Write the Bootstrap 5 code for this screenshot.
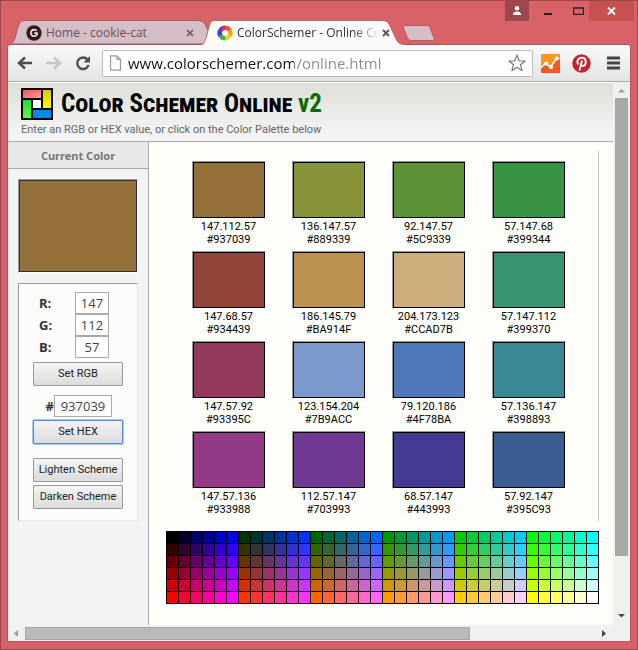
<!DOCTYPE html>
<html lang="en">
<head>
<meta charset="utf-8">
<meta name="viewport" content="width=device-width, initial-scale=1">
<title>ColorSchemer - Online Color Scheme Generator</title>
<link rel="stylesheet" href="https://cdn.jsdelivr.net/npm/bootstrap@5.3.0/dist/css/bootstrap.min.css">
<style>
  body { background: #d96269; border: 1px solid #9e484d; padding: 0 0 7px; font-family: Roboto, sans-serif; font-size: 11px; line-height: 13px; color: #000; }
  button { font-family: inherit; }
  svg { display: block; flex-shrink: 0; }

  /* window frame */
  .titlebar { height: 43px; padding: 0 3px 0 11px; }
  .browser-tab { position: relative; height: 24px; padding: 1px 14px 0; font: 12px/22px "Open Sans", sans-serif; color: #6e4d55; }
  .browser-tab > * { position: relative; }
  .browser-tab > .tab-shape { position: absolute; inset: 0; width: 100%; height: 100%; overflow: visible; }
  .tab-back { width: 196px; }
  .tab-front { width: 202px; padding-right: 15px; margin-left: -5px; color: #333; }
  .tab-label { color: inherit; text-decoration: none; overflow: hidden; white-space: nowrap; }
  .tab-front .tab-label { -webkit-mask-image: linear-gradient(90deg, #000 116px, transparent 142px); mask-image: linear-gradient(90deg, #000 116px, transparent 142px); }
  .bare { background: none; border: 0; padding: 0; color: inherit; }
  .new-tab { margin: 0 0 3px -3px; }
  .win-btn { height: 20px; border: 0; padding: 0; display: flex; align-items: center; justify-content: center; background: none; }
  .win-user { width: 24px; background: #9b474b; }
  .win-min { width: 38px; }
  .win-max { width: 22px; }
  .win-close { width: 45px; background: #c75050; }
  .window { margin: 0 6px; border: 1px solid #b5575c; border-top-color: #9f5358; border-radius: 4px 4px 0 0; background: #f0f0f0; overflow: hidden; }

  /* toolbar */
  .toolbar { height: 37px; padding: 0 9px; background: linear-gradient(#fafafa, #e3e3e3); border-bottom: 1px solid #aaa; }
  .nav-buttons { gap: 13px; }
  .address { height: 27px; margin-left: 11px; padding: 0 6px; background: #fff; border: 1px solid #bcbcbc; border-radius: 2px; }
  .address input { min-width: 0; border: 0; outline: 0; padding: 0; margin-left: 6px; font: 15px/24px "Open Sans", sans-serif; color: transparent; background: linear-gradient(90deg, #111 0 166px, #8b8b8b 166px); -webkit-background-clip: text; background-clip: text; }

  /* page */
  .site-head { height: 60px; padding: 5px 13px 0 13px; background: linear-gradient(#dfdfd9, #f4f4f4 90%); border-bottom: 1px solid #aaa; border-top: 1px solid #fff; }
  .site-title { margin: 0; font: bold 25px/32px "Roboto Condensed", "Open Sans Condensed", Roboto, sans-serif; font-variant: small-caps; white-space: nowrap; }
  .site-title span { color: #006e00; font-variant: normal; }
  .tagline { margin: 0; color: #666; line-height: 20px; }
  .sidebar { width: 141px; background: #f3f3f3; border-right: 1px solid #aaa; }
  .side-title { margin: 0; padding: 0; height: 27px; font: bold 11px/28px "Noto Sans", sans-serif; text-align: center; color: #777; background: #e8e8e8; border-bottom: 1px solid #aaa; }
  .inset { border: 1px solid; border-color: #999 #fff #fff #999; }
  .inset > div { border: 1px solid #000; }
  .current-color { height: 94px; margin: 10px 10px 0 10px; }
  .current-color > div { height: 100%; background: #937039; border-color: #333; }
  .controls { margin: 10px 10px 0 10px; padding: 8px 14px 11px; background: #fcfcfa; border: 1px solid; border-color: #999 #e6e6e6 #e6e6e6 #999; color: #333; }
  .controls label { font: bold 13px/22px "Open Sans", sans-serif; }
  .controls input { height: 22px; border: 1px solid #a9a9a9; padding: 0; background: #fff; color: #444; text-align: center; font: 13px/20px "Open Sans", sans-serif; }
  .rgb-row { padding: 0 14px 0 6px; }
  .rgb-row input { width: 34px; }
  .hex-row { margin: 9px 0 3px; padding-right: 11px; }
  .hex-row input { width: 58px; }
  .push { width: 90px; height: 24px; padding: 0; border: 1px solid #999; border-radius: 1px; background: linear-gradient(#f4f4f4, #dcdcdc); color: #222; font-size: 11px; line-height: 22px; white-space: nowrap; }
  .push-focus { border-color: #5b87d6; box-shadow: 0 0 0 1px #a9c6f7; }
  .push-group { margin-top: 14px; gap: 3px; }
  .main-area { background: #fdfefa; padding: 9px 14px 21px 17px; }
  .schemes { display: grid; grid-template-columns: repeat(4, 100px); justify-content: center; row-gap: 5px; padding: 10px 7px 5px 0; border-right: 1px solid #c4c4c4; }
  .scheme { text-align: center; }
  .swatch { width: 74px; height: 58px; margin: 0 auto 1px; }
  .swatch > div { height: 100%; }
  .palette { display: grid; grid-template-columns: repeat(36, 11px); grid-auto-rows: 11px; gap: 1px; padding: 1px; width: max-content; margin: 10px auto 0; background: #000; }
  .palette button { border: 0; padding: 0; }

  /* scrollbars */
  .scroll-v { width: 17px; background: #f0f0f0; }
  .scroll-v .thumb { width: 13px; height: 458px; background: #a8a8a8; }
  .scroll-h { height: 16px; padding-right: 17px; background: #f0f0f0; }
  .scroll-h .track { flex: 1; }
  .scroll-h .thumb { width: 78%; height: 13px; background: #bababa; border: 1px solid #a6a6a6; }
  .scroll-v .arrow { height: 16px; }
  .scroll-h .arrow { width: 17px; }
</style>
<script src="https://cdn.jsdelivr.net/npm/bootstrap@5.3.0/dist/js/bootstrap.bundle.min.js"></script>
</head>
<body class="d-flex flex-column min-vh-100">

<header class="titlebar d-flex align-items-start">
  <nav class="d-flex align-self-end align-items-end flex-shrink-0" aria-label="Tabs">
    <div class="browser-tab tab-back d-flex align-items-center">
      <svg class="tab-shape" viewBox="0 0 196 24" preserveAspectRatio="none"><path d="M-1 24C4 23 5 4 9 1.500Q10 .5 13 .5H186Q191 .5 193 4L202 24Z" fill="#d5bfc7" stroke="#ad5a62"/></svg>
      <svg width="16" height="16" viewBox="0 0 16 16"><circle cx="8" cy="8" r="7.700" fill="#371b20"/><path d="M10.700 5.800A3.300 3.300 0 1 0 11 9.600V8.100H8.300" fill="none" stroke="#eee" stroke-width="1.600"/></svg>
      <a href="#" class="tab-label flex-fill ms-1">Home - cookie-cat</a>
      <button class="bare" aria-label="Close tab"><svg width="8" height="8" viewBox="0 0 8 8"><path d="M1 1l6 6M7 1L1 7" stroke="#76545b" stroke-width="1.700"/></svg></button>
    </div>
    <div class="browser-tab tab-front d-flex align-items-center">
      <svg class="tab-shape" viewBox="0 0 202 24" preserveAspectRatio="none"><path d="M-1 25C4 23 5 5 8 2Q9 .5 12 .5H180Q184 .5 186 4L194 21Q196 25 202 25Z" fill="#fafafa"/><path d="M-1 24C4 23 5 5 8 2Q9 .5 12 .5H180Q184 .5 186 4L194 21Q196 24 202 24" fill="none" stroke="#b76b70"/></svg>
      <svg width="16" height="16" viewBox="0 0 16 16" fill="none" stroke-width="4.500"><path d="M8 2.700A5.300 5.300 0 0 1 12.600 5.300" stroke="#f25a22"/><path d="M12.600 5.300A5.300 5.300 0 0 1 12.600 10.700" stroke="#f6a21c"/><path d="M12.600 10.700A5.300 5.300 0 0 1 8 13.300" stroke="#d8dc20"/><path d="M8 13.300A5.300 5.300 0 0 1 3.400 10.700" stroke="#35b53d"/><path d="M3.400 10.700A5.300 5.300 0 0 1 3.400 5.300" stroke="#2d42e4"/><path d="M3.400 5.300A5.300 5.300 0 0 1 5.400 3.400" stroke="#7a21c4"/><path d="M5.400 3.400A5.300 5.300 0 0 1 8 2.700" stroke="#e02349"/></svg>
      <a href="#" class="tab-label flex-fill ms-1">ColorSchemer - Online Co</a>
      <button class="bare" aria-label="Close tab"><svg width="8" height="8" viewBox="0 0 8 8"><path d="M1 1l6 6M7 1L1 7" stroke="#555" stroke-width="1.800"/></svg></button>
    </div>
    <button class="bare new-tab" aria-label="New tab"><svg width="34" height="16" viewBox="0 0 34 16"><path d="M3 .5H25Q27 .5 28 2.500L32 13Q33 15.500 31 15.500H9Q6.500 15.500 5.500 13L1.500 3Q1 .5 3 .5Z" fill="#d5bfc7" stroke="#b55c63"/></svg></button>
  </nav>
  <div class="d-flex ms-auto flex-shrink-0">
    <button class="win-btn win-user" aria-label="User"><svg width="10" height="10" viewBox="0 0 10 10" fill="#fff"><circle cx="5" cy="2.300" r="2.200"/><path d="M1 9V7.500Q2 5.500 5 5.500T9 7.500V9Z"/></svg></button>
    <button class="win-btn win-min" aria-label="Minimize"><svg width="8" height="10" viewBox="0 0 8 10"><path d="M0 7h8v2H0z" fill="#222"/></svg></button>
    <button class="win-btn win-max" aria-label="Maximize"><svg width="11" height="8" viewBox="0 0 11 8"><path d="M.5 1H10.500V7.500H.5Z" fill="none" stroke="#222" stroke-width="1.400"/></svg></button>
    <button class="win-btn win-close" aria-label="Close"><svg width="9" height="8" viewBox="0 0 9 8"><path d="M1 .5l7 7M8 .5l-7 7" stroke="#fff" stroke-width="1.800"/></svg></button>
  </div>
</header>

<div class="window d-flex flex-column flex-grow-1">
  <form class="toolbar d-flex align-items-center" onsubmit="return false">
    <div class="nav-buttons d-flex align-items-center">
      <button type="button" class="bare" aria-label="Back"><svg width="16" height="14" viewBox="0 0 16 14"><path d="M15 7H3M8 1.500L2 7l6 5.500" fill="none" stroke="#4c4c4c" stroke-width="2.400"/></svg></button>
      <button type="button" class="bare" aria-label="Forward"><svg width="16" height="14" viewBox="0 0 16 14"><path d="M0 7H13M8 1.500L14 7l-6 5.500" fill="none" stroke="#c4c4c4" stroke-width="2.400"/></svg></button>
      <button type="button" class="bare" aria-label="Reload"><svg width="16" height="16" viewBox="0 0 16 16"><path d="M12.500 4.500A5.800 5.800 0 1 0 13.600 10" fill="none" stroke="#4c4c4c" stroke-width="2.400"/><path d="M15 1v6.500H8.500Z" fill="#4c4c4c"/></svg></button>
    </div>
    <div class="address d-flex align-items-center flex-fill">
      <svg width="13" height="16" viewBox="0 0 13 16"><path d="M1.500.8H8L11.500 4.500V15.200H1.500ZM8 .8V4.500H11.500" fill="#fafafa" stroke="#999" stroke-width="1.200"/></svg>
      <input type="text" class="flex-fill" aria-label="Address" value="www.colorschemer.com/online.html">
      <button type="button" class="bare flex-shrink-0" aria-label="Bookmark"><svg width="18" height="18" viewBox="0 0 18 18"><path d="M9 1L11.100 6.800 17.200 7 12.400 10.700 14.100 16.700 9 13.200 3.900 16.700 5.600 10.700 .8 7 6.900 6.800Z" fill="#fff" stroke="#7b7b7b" stroke-width="1.200" stroke-linejoin="round"/></svg></button>
    </div>
    <button type="button" class="bare ms-2" aria-label="Analytics"><svg width="19" height="19" viewBox="0 0 19 19"><rect width="19" height="19" rx="1" fill="#f7981d"/><path d="M0 13L5 9.500 9.500 13 15.500 4 19 6V19H0Z" fill="#f15a24"/><path d="M0 13.500L5 9.500 9.500 13 15.500 4.500" fill="none" stroke="#fff" stroke-width="1.600"/><g fill="#fff"><circle cx="5" cy="9.500" r="2"/><circle cx="10" cy="13" r="2"/><circle cx="15.800" cy="4.500" r="2.100"/></g></svg></button>
    <button type="button" class="bare ms-2 ps-1" aria-label="Pinterest"><svg width="19" height="19" viewBox="0 0 19 19"><circle cx="9.500" cy="9.500" r="9.200" fill="#c9202b"/><path d="M6.300 10.500C3.500 6 7.500 3.300 10.500 3.800C15 4.500 14.500 11.800 11 11.900Q9.400 12 8.900 10.700M10 6.500L7.400 16.500" fill="none" stroke="#fff" stroke-width="1.900"/></svg></button>
    <button type="button" class="bare ms-3" aria-label="Menu"><svg width="14" height="14" viewBox="0 0 14 14"><path d="M0 2H13M0 7H13M0 12H13" stroke="#444" stroke-width="2.800"/></svg></button>
  </form>

  <div class="d-flex flex-grow-1">
    <div class="d-flex flex-column flex-fill">
      <div class="site-head">
        <div class="d-flex align-items-center">
          <svg width="32" height="32" viewBox="0 0 32 32"><defs><linearGradient id="lr" x2="1" y2="1"><stop stop-color="#f55"/><stop offset="1" stop-color="#f99"/></linearGradient><linearGradient id="ly" x2="0" y2="1"><stop stop-color="#d8c800"/><stop offset="1" stop-color="#ff0"/></linearGradient><linearGradient id="lg" x2="0" y2="1"><stop stop-color="#2d3"/><stop offset="1" stop-color="#5f4"/></linearGradient></defs><rect width="32" height="32"/><path d="M2 2H20V10H2Z" fill="url(#lr)"/><path d="M22 2H30V20H22Z" fill="url(#ly)"/><path d="M2 12H10V30H2Z" fill="url(#lg)"/><path d="M12 22H30V30H12Z" fill="#08e"/><path d="M12 12H20V20H12Z" fill="#fff"/></svg>
          <h1 class="site-title ms-2">Color Schemer Online <span>v2</span></h1>
        </div>
        <p class="tagline">Enter an RGB or HEX value, or click on the Color Palette below</p>
      </div>
      <div class="d-flex flex-grow-1">
        <aside class="sidebar flex-shrink-0">
          <h2 class="side-title">Current Color</h2>
          <div class="current-color inset"><div></div></div>
          <form class="controls" onsubmit="return false">
            <div class="rgb-row d-flex justify-content-between"><label for="r">R:</label><input id="r" type="text" value="147"></div>
            <div class="rgb-row d-flex justify-content-between"><label for="g">G:</label><input id="g" type="text" value="112"></div>
            <div class="rgb-row d-flex justify-content-between"><label for="b">B:</label><input id="b" type="text" value="57"></div>
            <button type="button" class="push mt-1">Set RGB</button>
            <div class="hex-row d-flex justify-content-end"><label for="hex">#</label><input id="hex" type="text" value="937039"></div>
            <button type="button" class="push push-focus">Set HEX</button>
            <div class="push-group d-flex flex-column">
              <button type="button" class="push">Lighten Scheme</button>
              <button type="button" class="push">Darken Scheme</button>
            </div>
          </form>
        </aside>
        <main class="main-area flex-fill">
          <div class="schemes" id="schemes"></div>
          <div class="palette" id="palette"></div>
        </main>
      </div>
    </div>
    <div class="scroll-v d-flex flex-column align-items-center flex-shrink-0">
      <svg class="arrow" width="9" height="16" viewBox="0 0 9 16"><path d="M1 10.500L4.500 7 8 10.500Z" fill="#999"/></svg>
      <div class="thumb"></div>
      <svg class="arrow mt-auto" width="9" height="16" viewBox="0 0 9 16"><path d="M1 5L4.500 8.500 8 5Z" fill="#444"/></svg>
    </div>
  </div>
  <div class="scroll-h d-flex align-items-center">
    <svg class="arrow" width="17" height="9" viewBox="0 0 17 9"><path d="M10 1L6 4.500 10 8Z" fill="#999"/></svg>
    <div class="track"><div class="thumb"></div></div>
    <svg class="arrow" width="17" height="9" viewBox="0 0 17 9"><path d="M6 1L10 4.500 6 8Z" fill="#444"/></svg>
  </div>
</div>

<script>
  const schemes = ["937039","889339","5C9339","399344","934439","BA914F","CCAD7B","399370","93395C","7B9ACC","4F78BA","398893","933988","703993","443993","395C93"];
  document.getElementById("schemes").innerHTML = schemes.map(h => {
    const rgb = [0, 2, 4].map(i => parseInt(h.substr(i, 2), 16)).join(".");
    return `<div class="scheme"><div class="swatch inset"><div style="background:#${h}"></div></div>${rgb}<br>#${h}</div>`;
  }).join("");

  // web-safe colours: red by row, green by block of six, blue within a block
  let cells = "";
  for (let r = 0; r < 6; r++)
    for (let c = 0; c < 36; c++) {
      const rgb = [r, Math.floor(c / 6), c % 6].map(v => v * 51).join(",");
      cells += `<button type="button" aria-label="${rgb}" style="background:rgb(${rgb})"></button>`;
    }
  document.getElementById("palette").innerHTML = cells;
</script>
</body>
</html>
